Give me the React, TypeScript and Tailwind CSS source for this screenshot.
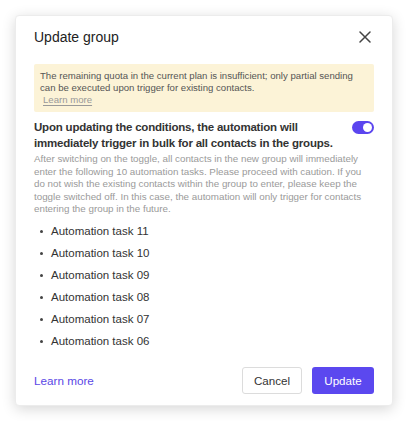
import React from 'react';

const tasks = ['11', '10', '09', '08', '07', '06'];

const App = () => {
  return (
    <div
      className="w-[408px] h-[421px] bg-white pt-[15px] pl-[15px]"
      style={{ fontFamily: '"Liberation Sans", Arial, sans-serif' }}
    >
      <div className="w-[378px] h-[391px] bg-white rounded-[4px] shadow-[0_3px_14px_rgba(0,0,0,0.16)] border border-[#ececec] px-[18px] flex flex-col">
        {/* Header */}
        <div className="flex items-center justify-between pt-[12px]">
          <h2 className="text-[14px] leading-[18px] font-medium text-[#222]">Update group</h2>
          <button className="w-[16px] h-[16px] flex items-center justify-center text-[#444] mr-[1px]">
            <svg width="12" height="12" viewBox="0 0 12 12" fill="none">
              <path d="M1 1L11 11M11 1L1 11" stroke="currentColor" strokeWidth="1.5" strokeLinecap="round" />
            </svg>
          </button>
        </div>

        {/* Quota warning */}
        <div className="mt-[18px] bg-[#fcf3d7] rounded-[2px] px-[6px] py-[6px] text-[9.6px] leading-[12px] text-[#555]">
          <p>
            The remaining quota in the current plan is insufficient; only partial sending can be executed upon
            trigger for existing contacts.
          </p>
          <a className="ml-[3px] text-[#999] underline underline-offset-[2px]">Learn more</a>
        </div>

        {/* Toggle row */}
        <div className="mt-[7px] flex items-start justify-between gap-3">
          <p className="text-[11.5px] leading-[16px] font-bold tracking-[-0.2px] text-[#333]">
            Upon updating the conditions, the automation will immediately trigger in bulk for all contacts in the
            groups.
          </p>
          <div className="mt-[2px] w-[22px] h-[13px] shrink-0 rounded-full bg-[#5b45ef] flex items-center justify-end pr-[2px]">
            <div className="w-[9px] h-[9px] rounded-full bg-white" />
          </div>
        </div>

        <p className="mt-[2px] text-[9.8px] leading-[12.6px] text-[#9a9a9a]">
          After switching on the toggle, all contacts in the new group will immediately enter the following 10
          automation tasks. Please proceed with caution. If you do not wish the existing contacts within the group to
          enter, please keep the toggle switched off. In this case, the automation will only trigger for contacts
          entering the group in the future.
        </p>

        {/* Task list */}
        <ul className="mt-[5px] flex flex-col">
          {tasks.map((t) => (
            <li key={t} className="flex items-center h-[22px] pl-[6px] text-[11.5px] text-[#333]">
              <span className="w-[3px] h-[3px] rounded-full bg-[#444] mr-[8px]" />
              Automation task {t}
            </li>
          ))}
        </ul>

        {/* Footer */}
        <div className="mt-[14px] flex items-center justify-between">
          <a className="text-[11.7px] text-[#5a48e6]">Learn more</a>
          <div className="flex items-center gap-[10px]">
            <button className="w-[60px] h-[27px] rounded-[3px] border border-[#dcdcdc] bg-white text-[11.6px] text-[#333]">
              Cancel
            </button>
            <button className="w-[62px] h-[27px] rounded-[3px] bg-[#5b48ef] text-[11.6px] text-white">Update</button>
          </div>
        </div>
      </div>
    </div>
  );
};

export default App;
